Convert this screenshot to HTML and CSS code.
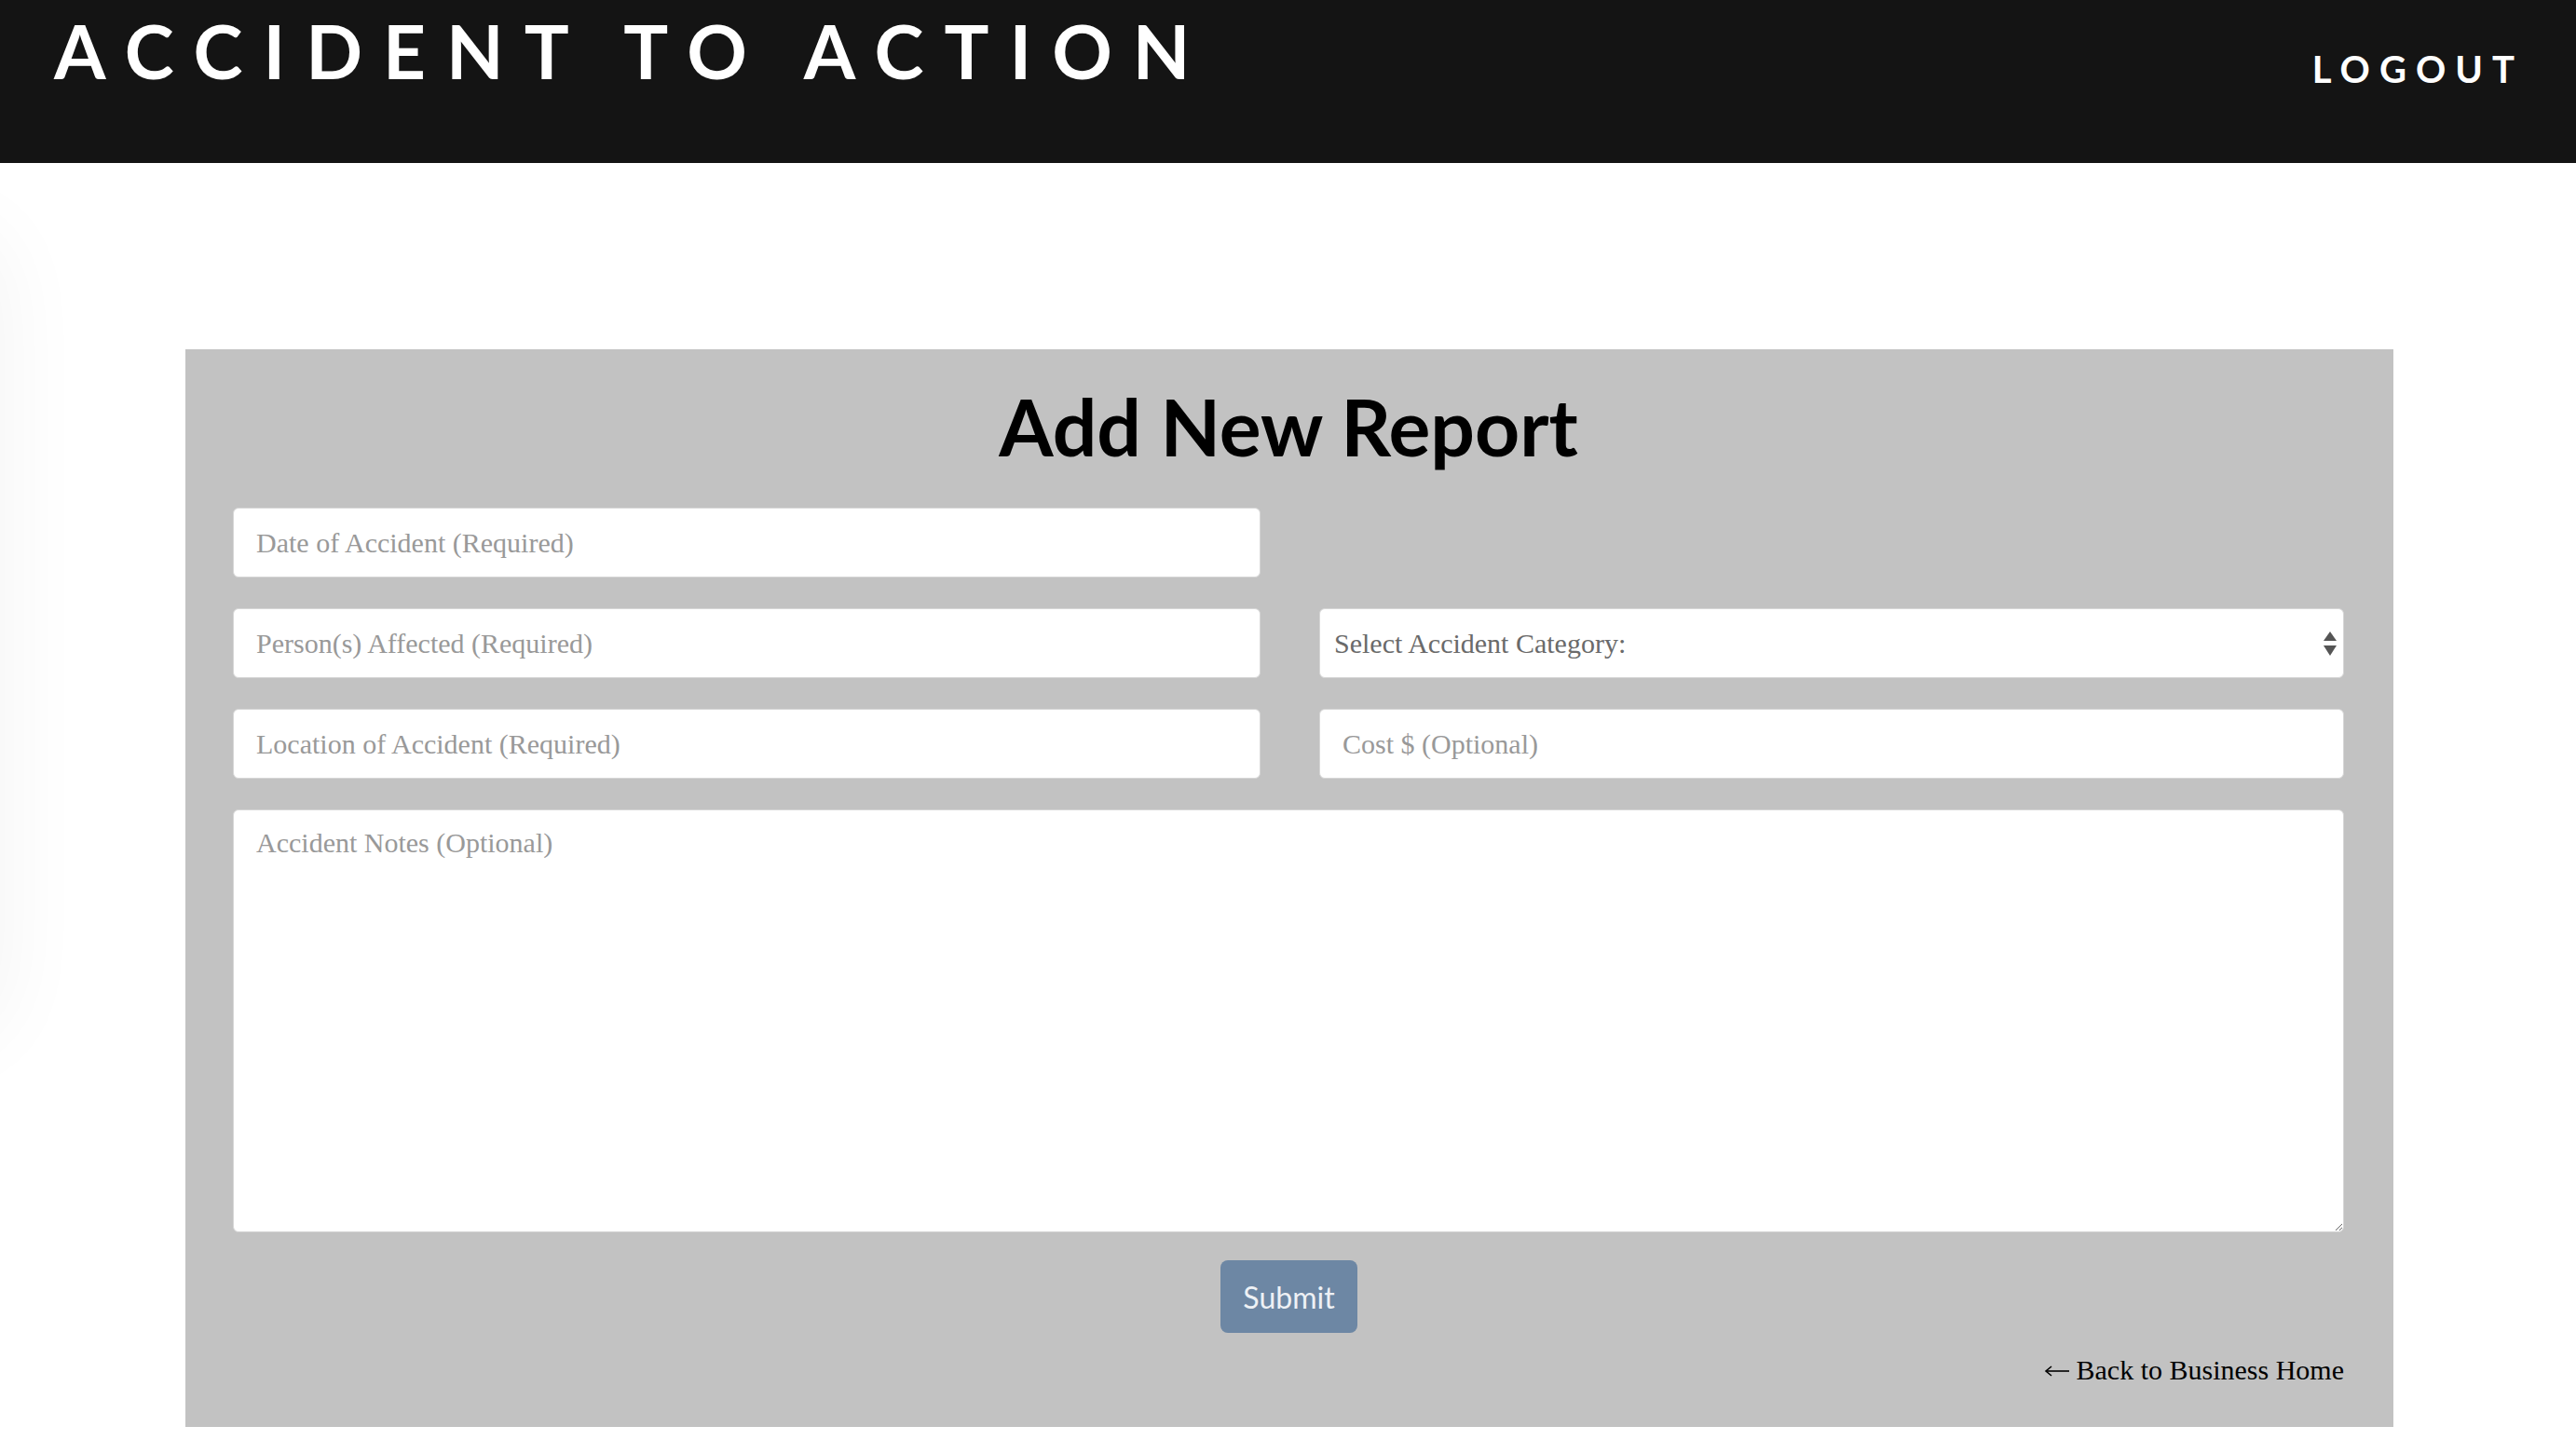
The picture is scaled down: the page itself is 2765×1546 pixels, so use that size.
FILE: index.html
```html
<!DOCTYPE html>
<html lang="en">
<head>
<meta charset="utf-8">
<title>Accident to Action - Add New Report</title>
<link rel="stylesheet" href="styles.css">
</head>
<body>
<div class="side-glow"></div>
<header class="topbar">
  <h1 class="brand">ACCIDENT TO ACTION</h1>
  <a class="logout" href="#">LOGOUT</a>
</header>
<main class="page">
  <section class="panel">
    <h2 class="panel-title">Add New Report</h2>
    <form class="report-form">
      <div class="row">
        <input class="field" type="text" placeholder="Date of Accident (Required)">
        <div></div>
      </div>
      <div class="row">
        <input class="field" type="text" placeholder="Person(s) Affected (Required)">
        <div class="select-wrap">
          <select class="field select">
            <option>Select Accident Category:</option>
          </select>
          <svg class="select-arrows" width="14" height="27" viewBox="0 0 14 27">
            <polygon points="7,0 14,10 0,10" fill="#555"/>
            <polygon points="0,15 14,15 7,26" fill="#555"/>
          </svg>
        </div>
      </div>
      <div class="row">
        <input class="field" type="text" placeholder="Location of Accident (Required)">
        <input class="field field-cost" type="text" placeholder="Cost $ (Optional)">
      </div>
      <textarea class="field notes" placeholder="Accident Notes (Optional)"></textarea>
      <div class="actions">
        <button class="submit" type="button">Submit</button>
      </div>
      <div class="back-row">
        <a class="back" href="#"><svg class="back-arrow" width="28" height="14" viewBox="0 0 28 14"><line x1="2" y1="7" x2="27" y2="7" stroke="#000" stroke-width="1.6"/><polyline points="8,2 2,7 8,12" fill="none" stroke="#000" stroke-width="1.6"/></svg> Back to Business Home</a>
      </div>
    </form>
  </section>
</main>
</body>
</html>
```

FILE: styles.css
```css
html, body {
  margin: 0;
  padding: 0;
  background: #ffffff;
  overflow: hidden;
}

body {
  width: 2765px;
  height: 1546px;
  font-family: "Liberation Serif", "Times New Roman", serif;
}

.side-glow {
  position: fixed;
  left: -320px;
  top: 250px;
  width: 320px;
  height: 860px;
  border-radius: 60px;
  box-shadow: 0 0 90px 10px rgba(0, 0, 0, 0.045);
}

.topbar {
  height: 175px;
  background: #141414;
  display: flex;
  justify-content: space-between;
  align-items: flex-start;
  box-sizing: border-box;
  padding: 0 56px 0 58px;
}

.brand {
  margin: 0;
  padding-top: 8px;
  font-family: Lato, "Open Sans", sans-serif;
  font-weight: 700;
  font-size: 80px;
  line-height: 92px;
  letter-spacing: 22px;
  color: #ffffff;
}

.logout {
  margin-top: 50px;
  font-family: Lato, "Open Sans", sans-serif;
  font-weight: 700;
  font-size: 40px;
  line-height: 48px;
  letter-spacing: 10px;
  color: #ffffff;
  text-decoration: none;
}

.page {
  padding-top: 200px;
}

.panel {
  width: 2370px;
  height: 1157px;
  margin: 0 auto 0 199px;
  background: #c2c2c2;
  box-sizing: border-box;
  padding: 28px 53px 0 51px;
}

.panel-title {
  margin: 0 0 32px;
  text-align: center;
  font-family: Lato, "Open Sans", sans-serif;
  font-weight: 700;
  font-size: 84px;
  line-height: 110px;
  color: #000000;
}

.report-form {
  display: flex;
  flex-direction: column;
  gap: 33px;
}

.row {
  display: grid;
  grid-template-columns: 1103px 1100px;
  column-gap: 63px;
}

.field {
  box-sizing: border-box;
  height: 75px;
  width: 100%;
  margin: 0;
  border: 1px solid #d6d6d6;
  border-radius: 6px;
  background: #ffffff;
  padding: 0 24px;
  font-family: "Liberation Serif", "Times New Roman", serif;
  font-size: 30px;
  color: #333333;
  outline: none;
}

.field::placeholder {
  color: #999999;
}

.select-wrap {
  position: relative;
}

.select {
  appearance: none;
  -webkit-appearance: none;
  padding: 0 40px 0 15px;
  color: #6a6a6a;
}

.select-arrows {
  position: absolute;
  right: 8px;
  top: 25px;
}

.notes {
  height: 454px;
  padding: 18px 24px 16px;
  resize: vertical;
  line-height: 34px;
}

.actions {
  display: flex;
  justify-content: center;
  margin-top: -3px;
}

.submit {
  width: 147px;
  height: 78px;
  margin-left: 1px;
  border: none;
  border-radius: 8px;
  background: #6d87a4;
  color: #eef1f5;
  font-family: Lato, "Open Sans", sans-serif;
  font-size: 32px;
  cursor: pointer;
}

.back-row {
  display: flex;
  justify-content: flex-end;
  margin-top: -10px;
}

.back {
  font-family: "Liberation Serif", "Times New Roman", serif;
  font-size: 30px;
  color: #000000;
  text-decoration: none;
  display: flex;
  align-items: center;
  gap: 7px;
}

.back-arrow {
  position: relative;
  top: 1px;
}
```
